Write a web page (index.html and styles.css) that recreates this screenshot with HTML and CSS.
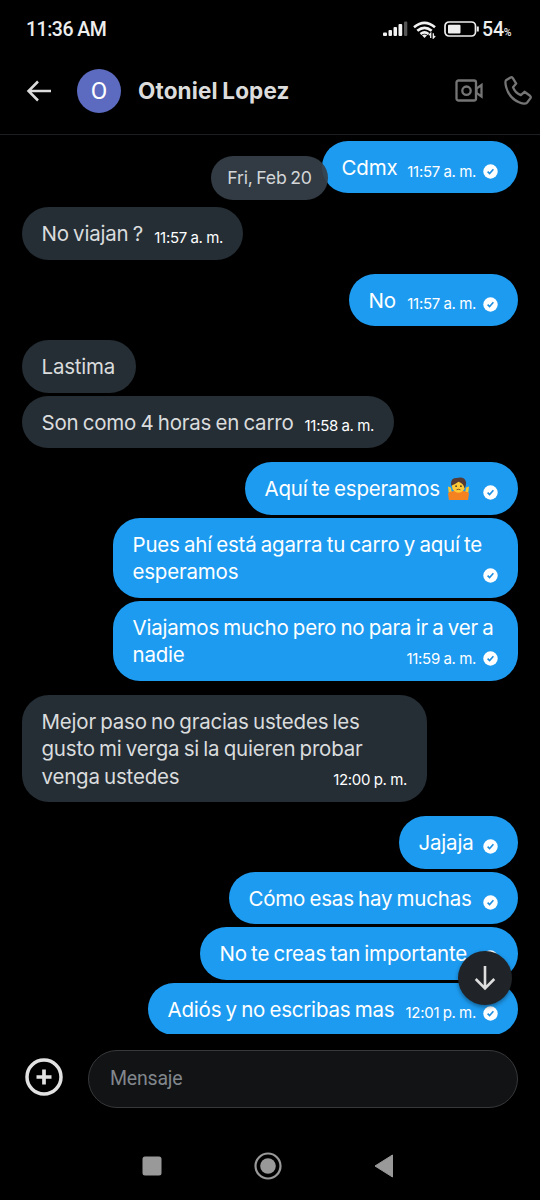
FILE: index.html
```html
<!DOCTYPE html>
<html lang="es">
<head>
<meta charset="utf-8">
<title>Otoniel Lopez</title>
<link rel="stylesheet" href="styles.css">
</head>
<body>
<svg class="defs" width="0" height="0">
  <symbol id="check" viewBox="0 0 15 15"><circle cx="7.500" cy="7.500" r="7.200" fill="#fff"/><path d="M4.600 7.600 6.600 9.600 10.400 5.300" fill="none" stroke="#1d8fe0" stroke-width="1.600"/></symbol>
</svg>
<div class="screen">
  <div class="status">
    <span class="clock">11:36 AM</span>
    <svg class="signal" width="25" height="16" viewBox="0 0 25 16"><g fill="#f2f2f2"><rect x="0" y="11.5" width="4" height="3.5" rx="1"/><rect x="5.5" y="9" width="3.5" height="6" rx="1"/><rect x="10.5" y="6" width="3.5" height="9" rx="1"/><rect x="15.5" y="3" width="3.7" height="12" rx="1"/></g><rect x="21" y="0.5" width="3.3" height="14.5" rx="1" fill="#555"/></svg>
    <svg class="wifi" width="24" height="18" viewBox="0 0 24 18"><g fill="none" stroke="#f2f2f2" stroke-width="2.6"><path d="M1 6.2Q11.5-2.6 22 6.2"/><path d="M4.3 9.8Q11.5 3.8 18.7 9.8"/><path d="M7.5 13Q11.5 9.8 15.5 13"/></g><path d="M9 14.3Q11.5 12.8 14 14.3L11.5 17Z" fill="#f2f2f2"/><path d="M17.7 17V12.3L15.8 14.3M20.3 12.3V17L22.2 15" fill="none" stroke="#f2f2f2" stroke-width="1.3"/></svg>
    <svg class="battery" width="36" height="16" viewBox="0 0 36 16"><rect x="1" y="1" width="30.5" height="14" rx="4" fill="none" stroke="#eee" stroke-width="1.7"/><rect x="4" y="3.8" width="12.5" height="8.6" rx="1" fill="#eee"/><path d="M33.8 5.5v5" stroke="#eee" stroke-width="2"/></svg>
    <span class="percent">54<small>%</small></span>
  </div>
  <header class="header">
    <svg class="back" width="26" height="22" viewBox="0 0 26 22"><path d="M12 1.5 2.5 11 12 20.5M2.5 11H25" fill="none" stroke="#dcdcdc" stroke-width="2.5"/></svg>
    <span class="avatar">O</span>
    <h1 class="name">Otoniel Lopez</h1>
    <svg class="video" width="28" height="24" viewBox="0 0 28 24"><g fill="none" stroke="#757575" stroke-width="2.3"><rect x="1.5" y="1.5" width="19.5" height="20" rx="2"/><circle cx="11.5" cy="11.7" r="4.2"/><path d="M26.500 6v11.500L21.500 14V9.500Z"/></g></svg>
    <svg class="phone" width="28" height="29" viewBox="0 0 28 29"><path d="M2 4.300 6.500 1.500C7.500 1 8.500 1.300 9 2.300L12.200 7.600 9 11.200C10.300 15 13 17.800 16.800 19.200L20.500 15.800 26 19.800C27 20.600 27 21.600 26.300 22.400L23 26.700C21.800 28 18 27.800 15 26.300 8.500 23.400 4 18 2.200 11.200 1.500 8.400 1 5.300 2 4.300Z" fill="none" stroke="#757575" stroke-width="2.300" stroke-linejoin="round"/></svg>
  </header>
  <main class="chat">
    <div class="date">Fri, Feb 20</div>
    <div class="group sent">
      <div class="bubble w-cdmx"><span class="text">Cdmx</span><span class="meta"><time>11:57 a. m.</time><svg class="check"><use href="#check"/></svg></span></div>
    </div>
    <div class="group received">
      <div class="bubble w-viajan"><span class="text">No viajan ?</span><span class="meta"><time>11:57 a. m.</time></span></div>
    </div>
    <div class="group sent">
      <div class="bubble w-no"><span class="text">No</span><span class="meta"><time>11:57 a. m.</time><svg class="check"><use href="#check"/></svg></span></div>
    </div>
    <div class="group received">
      <div class="bubble w-lastima"><span class="text">Lastima</span></div>
      <div class="bubble w-horas"><span class="text">Son como 4 horas en carro</span><span class="meta"><time>11:58 a. m.</time></span></div>
    </div>
    <div class="group sent">
      <div class="bubble w-aqui"><span class="text">Aquí te esperamos <svg class="emoji" viewBox="0 0 24 25"><path d="M1 10l3 1 1 5h14l1-5 3-1-1 8H2Z" fill="#f7c62f"/><path d="M2 16q5-2 10-2t10 2l-1 8H3Z" fill="#f58220"/><path d="M1 17 5 16v8H2ZM23 17l-4-1v8h3Z" fill="#f58220"/><circle cx="12" cy="9.500" r="6.800" fill="#ffca35"/><path d="M4.500 9Q3 1 10 1q9-2 10 5 0 4-2 6Q18 7 12 5 8 8 5.500 8.500Z" fill="#543b35"/><circle cx="9.500" cy="9.500" r=".9" fill="#49392d"/><circle cx="14.500" cy="9.500" r=".9" fill="#49392d"/><path d="M10 13.300q2-1 4 0" fill="none" stroke="#7b4b22"/></svg></span><span class="meta"><svg class="check"><use href="#check"/></svg></span></div>
      <div class="bubble multi w-ahi"><span class="text">Pues ahí está agarra tu carro y aquí te<br>esperamos</span><span class="meta"><svg class="check"><use href="#check"/></svg></span></div>
      <div class="bubble multi w-ahi"><span class="text">Viajamos mucho pero no para ir a ver a<br>nadie</span><span class="meta"><time>11:59 a. m.</time><svg class="check"><use href="#check"/></svg></span></div>
    </div>
    <div class="group received">
      <div class="bubble multi w-ahi"><span class="text">Mejor paso no gracias ustedes les<br>gusto mi verga si la quieren probar<br>venga ustedes</span><span class="meta"><time>12:00 p. m.</time></span></div>
    </div>
    <div class="group sent">
      <div class="bubble w-jajaja"><span class="text">Jajaja</span><span class="meta"><svg class="check"><use href="#check"/></svg></span></div>
      <div class="bubble w-muchas"><span class="text">Cómo esas hay muchas</span><span class="meta"><svg class="check"><use href="#check"/></svg></span></div>
      <div class="bubble w-creas"><span class="text">No te creas tan importante</span><span class="meta"><svg class="check"><use href="#check"/></svg></span></div>
      <div class="bubble w-adios"><span class="text">Adiós y no escribas mas</span><span class="meta"><time>12:01 p. m.</time><svg class="check"><use href="#check"/></svg></span></div>
    </div>
  </main>
  <div class="jump"><svg width="22" height="26" viewBox="0 0 22 26"><path d="M11 1v22M1.700 14 11 23.300 20.300 14" fill="none" stroke="#dedede" stroke-width="2.600"/></svg></div>
  <footer class="composer">
    <svg class="plus" width="38" height="38" viewBox="0 0 38 38"><g fill="none" stroke="#e2e2e2"><circle cx="19" cy="19" r="17" stroke-width="3.500"/><path d="M19 11.500v15M11.500 19h15" stroke-width="3.700"/></g></svg>
    <div class="field">Mensaje</div>
  </footer>
  <nav class="nav">
    <svg width="20" height="20" viewBox="0 0 20 20"><rect x=".5" y=".5" width="19" height="19" rx="2.500" fill="#999"/></svg>
    <svg width="28" height="28" viewBox="0 0 28 28"><circle cx="14" cy="14" r="12.500" fill="none" stroke="#999" stroke-width="2.200"/><circle cx="14" cy="14" r="7.800" fill="#999"/></svg>
    <svg width="20" height="24" viewBox="0 0 20 24"><path d="M1 12 18.500 1v22Z" fill="#999" stroke="#999" stroke-linejoin="round"/></svg>
  </nav>
</div>
</body>
</html>
```
FILE: styles.css
```css
* { box-sizing: border-box; }
body { margin: 0; background: #000; font-family: Inter, "Liberation Sans", sans-serif; }
svg { display: block; flex: none; }
.defs { position: absolute; }
.screen { position: relative; display: flex; flex-direction: column; width: 540px; height: 1200px; overflow: hidden; background: #000; color: #fff; white-space: nowrap; }

.status { display: flex; align-items: center; height: 58px; padding: 1px 0 0 26px; font-family: Roboto, sans-serif; color: #eee; }
.clock { width: 357px; font-size: 19.5px; font-weight: 500; letter-spacing: -.5px; }
.wifi { margin-left: 5px; }
.signal { margin-top: -1px; }
.battery { margin: -1px 0 0 7px; }
.percent { margin-left: 2px; font-size: 19.5px; font-weight: 500; letter-spacing: -.2px; }
.percent small { font-size: 10.5px; }

.header { display: flex; align-items: center; height: 77px; padding: 0 8px 11px 26px; border-bottom: 1px solid #1b1f22; }
.avatar { display: grid; place-items: center; width: 44px; height: 44px; margin-left: 25px; border-radius: 50%; background: #5c6bc0; font: 24px/44px Roboto, sans-serif; }
.name { margin: 0 auto 0 17px; font-size: 22.5px; font-weight: 700; letter-spacing: .15px; word-spacing: -1px; color: #dcdcdc; }
.phone { margin-left: 21px; }

.chat { position: relative; display: flex; flex-direction: column; gap: 14.2px; height: 898.5px; padding-top: 6px; overflow: hidden; }
.date { position: absolute; z-index: 1; left: 211px; top: 21px; width: 117px; height: 44px; border-radius: 22px; background: rgba(54, 64, 72, .93); color: #d3d6d8; font-size: 17.7px; letter-spacing: -.2px; word-spacing: -1.2px; line-height: 44.5px; text-align: center; }
.group { display: flex; flex-direction: column; gap: 3.2px; padding: 0 22px; }
.sent { align-items: flex-end; }
.received { align-items: flex-start; }
.bubble { display: flex; flex: none; justify-content: space-between; padding: 13px 20px 11.8px 19.5px; border-radius: 27px; font-size: 20.5px; line-height: 27.5px; letter-spacing: -.2px; word-spacing: -1.3px; }
.sent .bubble { background: #1d9bf0; }
.received .bubble { background: #252e35; color: #dadcdd; }
.multi { display: grid; grid-template-columns: 100%; }
.multi > * { grid-area: 1 / 1; }
.meta { display: flex; align-items: center; align-self: end; justify-self: end; gap: 7px; height: 20px; font-size: 15px; line-height: 20px; letter-spacing: -.3px; word-spacing: -.4px; color: #fff; }
.check { width: 15px; height: 15px; }
.emoji { display: inline-block; width: 23px; height: 24px; margin-left: 2.5px; vertical-align: -5px; }

.w-cdmx { width: 196px; }
.w-viajan { width: 221px; }
.w-no { width: 169px; }
.w-lastima { width: 114px; }
.w-horas { width: 372px; }
.w-aqui { width: 273px; }
.w-ahi { width: 405px; }
.w-jajaja { width: 119px; }
.w-muchas { width: 289px; }
.w-creas { width: 318px; }
.w-adios { width: 370px; }

.jump { position: absolute; left: 458px; top: 951px; display: grid; place-items: center; width: 54px; height: 54px; border-radius: 50%; background: #202327; box-shadow: 0 2px 4px rgba(0, 0, 0, .4); }
.composer { display: flex; align-items: center; gap: 25px; margin-top: 16px; padding: 0 22px 0 25px; }
.plus { margin-top: -4px; }
.field { flex: 1; height: 58px; padding-left: 21px; border: 1px solid #36383a; border-radius: 29px; background: #121315; color: #81878c; font: 19.5px/56px Roboto, sans-serif; letter-spacing: -.2px; }
.nav { display: flex; align-items: center; gap: 92px; height: 28px; margin-top: 44px; padding-left: 142px; }
```
